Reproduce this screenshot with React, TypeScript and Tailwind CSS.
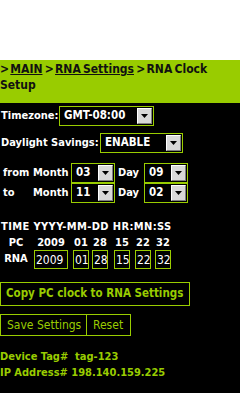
import React from "react";

function Sel({ value, w }: { value: string; w: string }) {
  return (
    <div className={`${w} h-[20px] border border-[#99cc00] bg-black flex items-stretch p-[1px]`}>
      <div className="flex-1 pl-[3px] flex items-center text-white font-bold text-[11.5px] leading-none whitespace-nowrap">
        {value}
      </div>
      <div className="w-[15px] bg-[#d8d8d8] border-t border-l border-t-white border-l-white border-r border-b border-r-[#808080] border-b-[#808080] flex items-center justify-center">
        <svg width="7" height="4" viewBox="0 0 7 4">
          <polygon points="0,0 7,0 3.5,4" fill="#000" />
        </svg>
      </div>
    </div>
  );
}

function Box({ v, w, ml }: { v: string; w: string; ml: string }) {
  return (
    <div className={`${w} ${ml} h-[19px] border border-[#99cc00] pl-[1px] flex items-center text-white text-[12px] font-normal leading-none`}>
      {v}
    </div>
  );
}

function PcCell({ v, w, ml }: { v: string; w: string; ml: string }) {
  return <div className={`${w} ${ml} text-center`}>{v}</div>;
}

function Gt() {
  return <span className="tracking-[-1px]">&gt;</span>;
}

export default function App() {
  return (
    <div className="w-[240px] h-[417px] bg-white font-['DejaVu_Sans_Condensed','DejaVu_Sans',sans-serif]">
      <div className="h-[60px]" />
      <div className="h-[43px] bg-[#99cc00] pt-[1px] text-[12px] leading-[16px] font-bold text-[#111] [word-spacing:-1.5px]">
        <Gt /> <span className="underline">MAIN</span> <Gt /> <span className="underline">RNA Settings</span> <Gt /> RNA Clock Setup
      </div>
      <div className="h-[290px] bg-black pt-[3px] text-white text-[11px] font-bold">
        <div className="flex items-center">
          <span className="pl-[1px] w-[59px] whitespace-nowrap">Timezone:</span>
          <Sel value="GMT-08:00" w="w-[95px]" />
        </div>
        <div className="flex items-center mt-[7px]">
          <span className="pl-[1px] w-[100px] whitespace-nowrap">Daylight Savings:</span>
          <Sel value="ENABLE" w="w-[83px]" />
        </div>
        <div className="mt-[10px]">
          <div className="flex items-center">
            <span className="pl-[3px] w-[33px]">from</span>
            <span className="w-[38px]">Month</span>
            <Sel value="03" w="w-[44px]" />
            <span className="w-[29px] pl-[3px]">Day</span>
            <Sel value="09" w="w-[44px]" />
          </div>
          <div className="flex items-center">
            <span className="pl-[3px] w-[33px]">to</span>
            <span className="w-[38px]">Month</span>
            <Sel value="11" w="w-[44px]" />
            <span className="w-[29px] pl-[3px]">Day</span>
            <Sel value="02" w="w-[44px]" />
          </div>
        </div>
        <div className="mt-[16px] leading-[16px] pl-[1px] tracking-[0.4px] whitespace-nowrap">TIME YYYY-MM-DD HR:MN:SS</div>
        <div className="flex leading-[15px]">
          <div className="w-[32px] text-center">PC</div>
          <PcCell v="2009" w="w-[34px]" ml="ml-[2px]" />
          <PcCell v="01" w="w-[16px]" ml="ml-[5px]" />
          <PcCell v="28" w="w-[16px]" ml="ml-[3px]" />
          <PcCell v="15" w="w-[16px]" ml="ml-[6px]" />
          <PcCell v="22" w="w-[16px]" ml="ml-[5px]" />
          <PcCell v="32" w="w-[16px]" ml="ml-[4px]" />
        </div>
        <div className="flex items-center">
          <div className="w-[32px] text-center">RNA</div>
          <Box v="2009" w="w-[34px]" ml="ml-[2px]" />
          <Box v="01" w="w-[16px]" ml="ml-[5px]" />
          <Box v="28" w="w-[16px]" ml="ml-[3px]" />
          <Box v="15" w="w-[16px]" ml="ml-[6px]" />
          <Box v="22" w="w-[16px]" ml="ml-[5px]" />
          <Box v="32" w="w-[16px]" ml="ml-[4px]" />
        </div>
        <div className="mt-[13px] w-[190px] h-[24px] border border-[#99cc00] flex items-center pl-[5px] text-[11.5px] font-bold text-[#99cc00] whitespace-nowrap">
          Copy PC clock to RNA Settings
        </div>
        <div className="mt-[8px] flex">
          <div className="w-[87px] h-[22px] border border-[#99cc00] flex items-center pl-[6px] text-[12px] font-normal text-[#99cc00] whitespace-nowrap">
            Save Settings
          </div>
          <div className="w-[45px] h-[22px] border border-[#99cc00] -ml-[1px] flex items-center pl-[6px] text-[12px] font-normal text-[#99cc00]">
            Reset
          </div>
        </div>
        <div className="mt-[13px] leading-[16px] text-[#99cc00] whitespace-nowrap">
          <div>Device Tag#&nbsp; tag-123</div>
          <div>IP Address# 198.140.159.225</div>
        </div>
      </div>
    </div>
  );
}
